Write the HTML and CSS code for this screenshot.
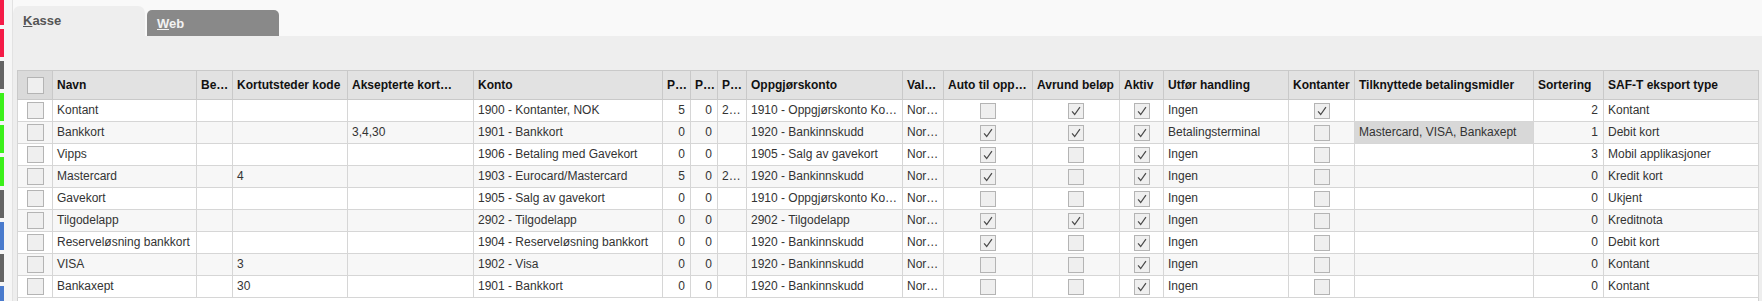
FILE: index.html
```html
<!DOCTYPE html>
<html lang="no">
<head>
    <meta charset="UTF-8">
    <title>Betalingsmidler</title>
    <link rel="stylesheet" href="styles.css">
</head>
<body>
<div class="app">
    <aside class="rail">
        <span class="bar red"></span>
        <span class="bar red"></span>
        <span class="bar gray"></span>
        <span class="bar green"></span>
        <span class="bar green"></span>
        <span class="bar green"></span>
        <span class="bar gray"></span>
        <span class="bar blue"></span>
        <span class="bar gray"></span>
        <span class="bar blue"></span>
    </aside>

    <div class="workspace">
        <nav class="tabs">
            <span class="tab active"><u>K</u>asse</span>
            <span class="tab"><u>W</u>eb</span>
        </nav>

        <section class="panel">
          <div class="grid-wrap">
            <table class="grid">
                <colgroup>
                    <col class="c-sel"><col class="c-navn"><col class="c-be"><col class="c-kode">
                    <col class="c-aksept"><col class="c-konto"><col class="c-p1"><col class="c-p2">
                    <col class="c-p3"><col class="c-oppgj"><col class="c-val"><col class="c-auto">
                    <col class="c-avrund"><col class="c-aktiv"><col class="c-handling"><col class="c-kontanter">
                    <col class="c-tilkn"><col class="c-sort"><col class="c-saft">
                </colgroup>
                <thead>
                    <tr>
                        <th class="sel"><span class="cb"></span></th>
                        <th>Navn</th>
                        <th>Be…</th>
                        <th>Kortutsteder kode</th>
                        <th>Aksepterte kort…</th>
                        <th>Konto</th>
                        <th>P…</th>
                        <th>P…</th>
                        <th>P…</th>
                        <th>Oppgjørskonto</th>
                        <th>Val…</th>
                        <th>Auto til opp…</th>
                        <th>Avrund beløp</th>
                        <th>Aktiv</th>
                        <th>Utfør handling</th>
                        <th>Kontanter</th>
                        <th>Tilknyttede betalingsmidler</th>
                        <th>Sortering</th>
                        <th>SAF-T eksport type</th>
                    </tr>
                </thead>
                <tbody>
                    <tr>
                        <td class="sel"><span class="cb"></span></td>
                        <td>Kontant</td><td></td><td></td><td></td>
                        <td>1900 - Kontanter, NOK</td>
                        <td class="num">5</td><td class="num">0</td><td>2…</td>
                        <td>1910 - Oppgjørskonto Ko…</td>
                        <td>Nor…</td>
                        <td class="chk"><span class="cb"></span></td>
                        <td class="chk"><span class="cb"><svg viewBox="0 0 16 16"><path d="M3.5 8.5 6.5 12 12.5 3.5"/></svg></span></td>
                        <td class="chk"><span class="cb"><svg viewBox="0 0 16 16"><path d="M3.5 8.5 6.5 12 12.5 3.5"/></svg></span></td>
                        <td>Ingen</td>
                        <td class="chk"><span class="cb"><svg viewBox="0 0 16 16"><path d="M3.5 8.5 6.5 12 12.5 3.5"/></svg></span></td>
                        <td></td>
                        <td class="num">2</td>
                        <td>Kontant</td>
                    </tr>
                    <tr>
                        <td class="sel"><span class="cb"></span></td>
                        <td>Bankkort</td><td></td><td></td><td>3,4,30</td>
                        <td>1901 - Bankkort</td>
                        <td class="num">0</td><td class="num">0</td><td></td>
                        <td>1920 - Bankinnskudd</td>
                        <td>Nor…</td>
                        <td class="chk"><span class="cb"><svg viewBox="0 0 16 16"><path d="M3.5 8.5 6.5 12 12.5 3.5"/></svg></span></td>
                        <td class="chk"><span class="cb"><svg viewBox="0 0 16 16"><path d="M3.5 8.5 6.5 12 12.5 3.5"/></svg></span></td>
                        <td class="chk"><span class="cb"><svg viewBox="0 0 16 16"><path d="M3.5 8.5 6.5 12 12.5 3.5"/></svg></span></td>
                        <td>Betalingsterminal</td>
                        <td class="chk"><span class="cb"></span></td>
                        <td class="linked">Mastercard, VISA, Bankaxept</td>
                        <td class="num">1</td>
                        <td>Debit kort</td>
                    </tr>
                    <tr>
                        <td class="sel"><span class="cb"></span></td>
                        <td>Vipps</td><td></td><td></td><td></td>
                        <td>1906 - Betaling med Gavekort</td>
                        <td class="num">0</td><td class="num">0</td><td></td>
                        <td>1905 - Salg av gavekort</td>
                        <td>Nor…</td>
                        <td class="chk"><span class="cb"><svg viewBox="0 0 16 16"><path d="M3.5 8.5 6.5 12 12.5 3.5"/></svg></span></td>
                        <td class="chk"><span class="cb"></span></td>
                        <td class="chk"><span class="cb"><svg viewBox="0 0 16 16"><path d="M3.5 8.5 6.5 12 12.5 3.5"/></svg></span></td>
                        <td>Ingen</td>
                        <td class="chk"><span class="cb"></span></td>
                        <td></td>
                        <td class="num">3</td>
                        <td>Mobil applikasjoner</td>
                    </tr>
                    <tr>
                        <td class="sel"><span class="cb"></span></td>
                        <td>Mastercard</td><td></td><td>4</td><td></td>
                        <td>1903 - Eurocard/Mastercard</td>
                        <td class="num">5</td><td class="num">0</td><td>2…</td>
                        <td>1920 - Bankinnskudd</td>
                        <td>Nor…</td>
                        <td class="chk"><span class="cb"><svg viewBox="0 0 16 16"><path d="M3.5 8.5 6.5 12 12.5 3.5"/></svg></span></td>
                        <td class="chk"><span class="cb"></span></td>
                        <td class="chk"><span class="cb"><svg viewBox="0 0 16 16"><path d="M3.5 8.5 6.5 12 12.5 3.5"/></svg></span></td>
                        <td>Ingen</td>
                        <td class="chk"><span class="cb"></span></td>
                        <td></td>
                        <td class="num">0</td>
                        <td>Kredit kort</td>
                    </tr>
                    <tr>
                        <td class="sel"><span class="cb"></span></td>
                        <td>Gavekort</td><td></td><td></td><td></td>
                        <td>1905 - Salg av gavekort</td>
                        <td class="num">0</td><td class="num">0</td><td></td>
                        <td>1910 - Oppgjørskonto Ko…</td>
                        <td>Nor…</td>
                        <td class="chk"><span class="cb"></span></td>
                        <td class="chk"><span class="cb"></span></td>
                        <td class="chk"><span class="cb"><svg viewBox="0 0 16 16"><path d="M3.5 8.5 6.5 12 12.5 3.5"/></svg></span></td>
                        <td>Ingen</td>
                        <td class="chk"><span class="cb"></span></td>
                        <td></td>
                        <td class="num">0</td>
                        <td>Ukjent</td>
                    </tr>
                    <tr>
                        <td class="sel"><span class="cb"></span></td>
                        <td>Tilgodelapp</td><td></td><td></td><td></td>
                        <td>2902 - Tilgodelapp</td>
                        <td class="num">0</td><td class="num">0</td><td></td>
                        <td>2902 - Tilgodelapp</td>
                        <td>Nor…</td>
                        <td class="chk"><span class="cb"><svg viewBox="0 0 16 16"><path d="M3.5 8.5 6.5 12 12.5 3.5"/></svg></span></td>
                        <td class="chk"><span class="cb"><svg viewBox="0 0 16 16"><path d="M3.5 8.5 6.5 12 12.5 3.5"/></svg></span></td>
                        <td class="chk"><span class="cb"><svg viewBox="0 0 16 16"><path d="M3.5 8.5 6.5 12 12.5 3.5"/></svg></span></td>
                        <td>Ingen</td>
                        <td class="chk"><span class="cb"></span></td>
                        <td></td>
                        <td class="num">0</td>
                        <td>Kreditnota</td>
                    </tr>
                    <tr>
                        <td class="sel"><span class="cb"></span></td>
                        <td>Reserveløsning bankkort</td><td></td><td></td><td></td>
                        <td>1904 - Reserveløsning bankkort</td>
                        <td class="num">0</td><td class="num">0</td><td></td>
                        <td>1920 - Bankinnskudd</td>
                        <td>Nor…</td>
                        <td class="chk"><span class="cb"><svg viewBox="0 0 16 16"><path d="M3.5 8.5 6.5 12 12.5 3.5"/></svg></span></td>
                        <td class="chk"><span class="cb"></span></td>
                        <td class="chk"><span class="cb"><svg viewBox="0 0 16 16"><path d="M3.5 8.5 6.5 12 12.5 3.5"/></svg></span></td>
                        <td>Ingen</td>
                        <td class="chk"><span class="cb"></span></td>
                        <td></td>
                        <td class="num">0</td>
                        <td>Debit kort</td>
                    </tr>
                    <tr>
                        <td class="sel"><span class="cb"></span></td>
                        <td>VISA</td><td></td><td>3</td><td></td>
                        <td>1902 - Visa</td>
                        <td class="num">0</td><td class="num">0</td><td></td>
                        <td>1920 - Bankinnskudd</td>
                        <td>Nor…</td>
                        <td class="chk"><span class="cb"></span></td>
                        <td class="chk"><span class="cb"></span></td>
                        <td class="chk"><span class="cb"><svg viewBox="0 0 16 16"><path d="M3.5 8.5 6.5 12 12.5 3.5"/></svg></span></td>
                        <td>Ingen</td>
                        <td class="chk"><span class="cb"></span></td>
                        <td></td>
                        <td class="num">0</td>
                        <td>Kontant</td>
                    </tr>
                    <tr>
                        <td class="sel"><span class="cb"></span></td>
                        <td>Bankaxept</td><td></td><td>30</td><td></td>
                        <td>1901 - Bankkort</td>
                        <td class="num">0</td><td class="num">0</td><td></td>
                        <td>1920 - Bankinnskudd</td>
                        <td>Nor…</td>
                        <td class="chk"><span class="cb"></span></td>
                        <td class="chk"><span class="cb"></span></td>
                        <td class="chk"><span class="cb"><svg viewBox="0 0 16 16"><path d="M3.5 8.5 6.5 12 12.5 3.5"/></svg></span></td>
                        <td>Ingen</td>
                        <td class="chk"><span class="cb"></span></td>
                        <td></td>
                        <td class="num">0</td>
                        <td>Kontant</td>
                    </tr>
                </tbody>
            </table>
          </div>
        </section>
    </div>
</div>
</body>
</html>
```

FILE: styles.css
```css
* {
    margin: 0;
    padding: 0;
    box-sizing: border-box;
}

body {
    font-family: "Liberation Sans", Arial, sans-serif;
    font-size: 12px;
    color: #333;
    background-color: #f9f9f9;
    overflow: hidden;
}

.app {
    display: flex;
    height: 100vh;
}

/* left status rail */
.rail {
    width: 13px;
    flex-shrink: 0;
    display: flex;
    flex-direction: column;
    gap: 4px;
    margin-top: -3px;
    background-color: #f6f6f6;
    border-right: 1px solid #e2e2e2;
}

.rail .bar {
    display: block;
    width: 4px;
    height: 28.1px;
    flex-shrink: 0;
}

.bar.red { background-color: #f41b47; }
.bar.gray { background-color: #646464; }
.bar.green { background-color: #3cf01a; }
.bar.blue { background-color: #4a7bcd; }

.workspace {
    flex: 1;
    display: flex;
    flex-direction: column;
}

/* tabs */
.tabs {
    display: flex;
    align-items: flex-end;
    gap: 2px;
    height: 36px;
    padding-top: 6px;
}

.tab {
    width: 132px;
    height: 26px;
    padding: 2px 0 0 10px;
    line-height: 24px;
    font-size: 13px;
    font-weight: bold;
    color: #f2f2f2;
    background-color: #898989;
    border-radius: 5px 5px 0 0;
}

.tab.active {
    height: 30px;
    padding-top: 0;
    line-height: 30px;
    color: #555;
    background-color: #eeeeee;
    border-radius: 7px 7px 0 0;
}

.panel {
    flex: 1;
    display: flex;
    flex-direction: column;
    background-color: #eeeeee;
    padding: 34px 3px 0 4px;
}

.grid-wrap {
    flex: 1;
    width: 1742px;
    background-color: #fff;
    border-left: 1px solid #d0d0d0;
    border-right: 1px solid #d0d0d0;
}

/* grid */
.grid {
    border-collapse: collapse;
    table-layout: fixed;
    width: 1742px;
    margin-left: -1px;
    background-color: #fff;
}

.c-sel { width: 35px; }
.c-navn { width: 144px; }
.c-be { width: 36px; }
.c-kode { width: 115px; }
.c-aksept { width: 126px; }
.c-konto { width: 189px; }
.c-p1 { width: 28px; }
.c-p2 { width: 27px; }
.c-p3 { width: 29px; }
.c-oppgj { width: 156px; }
.c-val { width: 41px; }
.c-auto { width: 89px; }
.c-avrund { width: 87px; }
.c-aktiv { width: 44px; }
.c-handling { width: 125px; }
.c-kontanter { width: 66px; }
.c-tilkn { width: 179px; }
.c-sort { width: 70px; }
.c-saft { width: 155px; }

.grid th, .grid td {
    padding: 0 5px 0 4px;
    white-space: nowrap;
    overflow: hidden;
    text-align: left;
    vertical-align: middle;
}

.grid th {
    line-height: 28px;
    font-weight: bold;
    color: #111;
    background-color: #e2e2e2;
    border: 1px solid #c9c9c9;
}

.grid th.sel { background-color: #dadada; }

.grid td {
    line-height: 21px;
    border: 1px solid #d6d6d6;
}

.grid tbody tr:nth-child(even) td { background-color: #f7f7f7; }

.grid td.num { text-align: right; }

.grid td.linked,
.grid tbody tr:nth-child(even) td.linked { background-color: #d8d8d8; }

.grid .sel, .grid .chk {
    text-align: center;
    padding: 0;
}

/* checkboxes */
.cb {
    display: inline-block;
    width: 16px;
    height: 16px;
    vertical-align: middle;
    background-color: #efefef;
    border: 1px solid #b4b4b4;
}

.sel .cb {
    width: 17px;
    height: 17px;
}

.cb svg {
    display: block;
    width: 14px;
    height: 14px;
    fill: none;
    stroke: #4a4a4a;
    stroke-width: 1.4;
}
```
